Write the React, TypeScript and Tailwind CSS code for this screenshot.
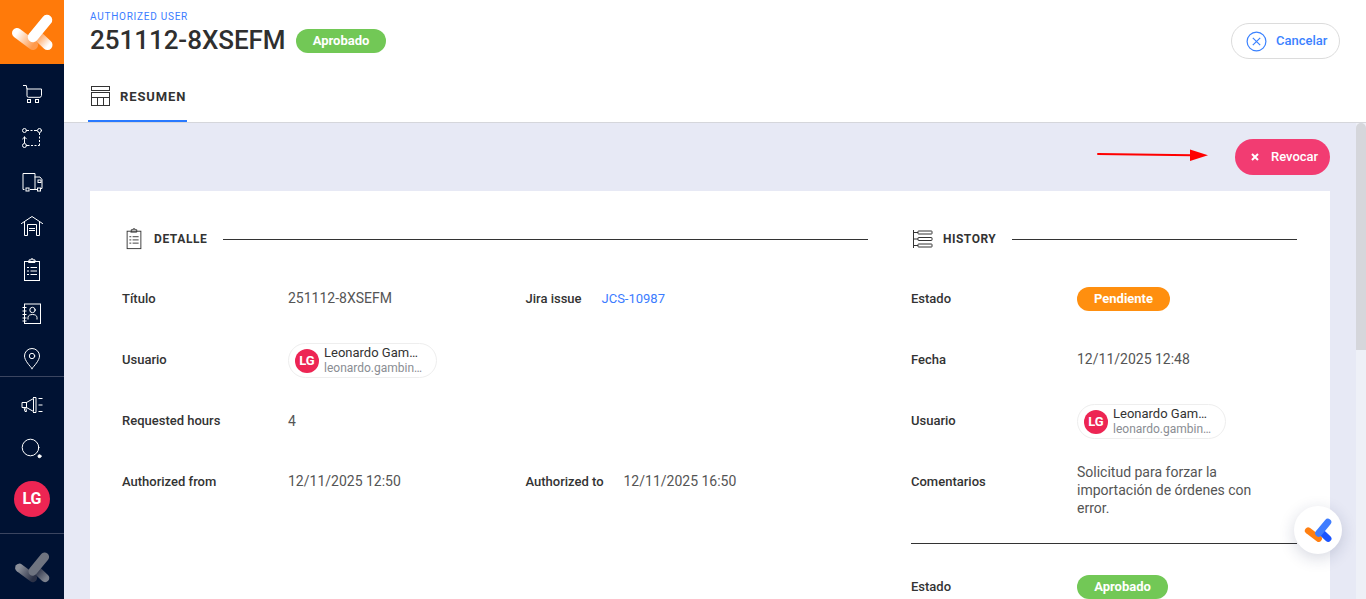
import React from "react";

const Logo = ({ size = 64, muted = false, color = false }: { size?: number; muted?: boolean; color?: boolean }) => {
  const id = muted ? "m" : color ? "c" : "w";
  const a = color ? "#ff7f11" : muted ? "#8a8e98" : "#ffffff";
  const b = color ? "#ff7f11" : muted ? "#2c3247" : "#ff9a4d";
  const c = color ? "#3f7dff" : muted ? "#6f7480" : "#ffffff";
  const d = color ? "#1c55ff" : muted ? "#7b808c" : "#ffffff";
  const e = color ? "#1c55ff" : muted ? "#2c3247" : "#ff9a4d";
  return (
    <svg width={size} height={size} viewBox="0 0 64 64" fill="none">
      <defs>
        <linearGradient id={id + "1"} x1="17" y1="33" x2="34" y2="44" gradientUnits="userSpaceOnUse">
          <stop stopColor={a} />
          <stop offset="1" stopColor={b} />
        </linearGradient>
        <linearGradient id={id + "2"} x1="48" y1="46" x2="37" y2="36" gradientUnits="userSpaceOnUse">
          <stop stopColor={d} />
          <stop offset="1" stopColor={e} />
        </linearGradient>
      </defs>
      <line x1="17" y1="33" x2="33" y2="45" stroke={`url(#${id}1)`} strokeWidth="10" strokeLinecap="round" />
      <line x1="39" y1="37" x2="47.500" y2="45" stroke={`url(#${id}2)`} strokeWidth="10" strokeLinecap="round" />
      <line x1="33" y1="37" x2="47" y2="20" stroke={c} strokeWidth="10.500" strokeLinecap="round" />
    </svg>
  );
};

const I = ({ children, w = 24 }: { children: React.ReactNode; w?: number }) => (
  <svg width={w} height={w} viewBox="0 0 24 24" fill="none" stroke="currentColor" strokeWidth="1" strokeLinecap="square">
    {children}
  </svg>
);

const Clip = () => (
  <>
    <rect x="4.5" y="3.5" width="15" height="19" />
    <path d="M9 3.5V1.9h2.2V.8h1.6v1.1H15v2.6H9z" />
    <path d="M7.5 9.5h1M11 9.5h5.5M7.5 13h1M11 13h5.5M7.5 16.5h1M11 16.5h5.5" />
  </>
);

const navTop = [
  <I key="cart"><path d="M3.500 3.500h2.800l.7 3.500h14.500v6.500a2 2 0 0 1-1.500 1.800H8.500a1.500 1.500 0 0 1-1.500-1.500V7" /><rect x="7.500" y="17.500" width="3" height="3" /><rect x="15.500" y="17.500" width="3" height="3" /></I>,
  <I key="route"><circle cx="4.500" cy="4.500" r="2" /><circle cx="19.500" cy="4.500" r="2" /><circle cx="4.500" cy="19.500" r="2" /><path d="M7.500 4.500h1M11 4.500h1M14.500 4.500h2M19.500 7.500v1M19.500 11v1M19.500 14.500v1M19.500 18v1.500h-1M16 19.500h-1M12.500 19.500h-1M9 19.500H7.500M4.500 16.500V11M2.700 12.800l1.800-1.800 1.800 1.800" /></I>,
  <I key="truck"><path d="M4 19.500H3V3.500h12v16h-4.500M15 7h5l2 2.500v9h-1M15 19.500h2" /><rect x="6" y="18" width="3" height="3" /><rect x="17.500" y="18" width="3" height="3" /><rect x="18" y="10" width="3" height="2.500" /></I>,
  <I key="warehouse"><path d="M1.500 9.500 12 2.500 22.500 9.500M4.500 8v13.500h3V10.500h9v11h3V8" /><path d="M9.500 14.500h5M9.500 16.500h5" /></I>,
  <I key="clip"><Clip /></I>,
  <I key="contacts"><rect x="4.500" y="2" width="16" height="19.500" /><path d="M3 5.500h3M3 9h3M3 12.500h3M3 16h3M3 19h3" /><circle cx="12.500" cy="8" r="2.700" /><path d="M8 17v-1.500c0-2 2-3 4.500-3s4.500 1 4.500 3V17" /></I>,
  <I key="pin"><path d="M12 22.500c-2-2.500-7.500-8-7.500-12.500a7.500 7.500 0 0 1 15 0c0 4.500-5.500 10-7.500 12.500z" /><circle cx="12" cy="10" r="2.700" /></I>,
];

const Row = ({ label, children }: { label: string; children: React.ReactNode }) => (
  <div className="flex h-[61px] items-center">
    <div className="w-[166px] shrink-0 text-[13px] font-medium text-[#333]">{label}</div>
    {children}
  </div>
);

const Val = ({ children }: { children: React.ReactNode }) => (
  <div className="text-[14px] text-[#555]">{children}</div>
);

const Chip = () => (
  <div className="mt-[2px] flex h-[35px] w-[149px] items-center gap-[5px] rounded-full border border-[#eee] bg-white pl-[6px]">
    <div className="flex h-6 w-6 shrink-0 items-center justify-center rounded-full bg-[#ed2553] text-[13px] font-bold text-white">LG</div>
    <div className="w-[104px] whitespace-nowrap">
      <div className="text-[13px] leading-[15px] text-[#333]">Leonardo Gam…</div>
      <div className="mt-[1px] text-[12px] leading-[15px] text-[#8a8d93]">leonardo.gambin…</div>
    </div>
  </div>
);

const Badge = ({ text, w, bg }: { text: string; w: string; bg: string }) => (
  <span className={`flex h-6 items-center justify-center rounded-full text-[13px] font-bold text-white ${w} ${bg}`}>{text}</span>
);

const Section = ({ icon, title, tracking, gap }: { icon: React.ReactNode; title: string; tracking: string; gap: string }) => (
  <div className="flex h-[24px] items-center text-[#333]">
    {icon}
    <span className={`whitespace-nowrap text-[12px] font-bold ${tracking}`}>{title}</span>
    <div className={`h-px flex-1 bg-[#333] ${gap}`} />
  </div>
);

export default function App() {
  return (
    <div className="flex h-[599px] w-[1366px] overflow-hidden bg-white font-['Roboto',sans-serif]">
      <aside className="flex w-16 shrink-0 flex-col bg-[#001233] text-white">
        <div className="h-16 bg-[#ff7a0a]"><Logo /></div>
        <div className="h-[312px] pt-2">
          {navTop.map((n, i) => (
            <div key={i} className="flex h-11 items-center justify-center">{n}</div>
          ))}
        </div>
        <div className="h-px bg-[#3b4560]" />
        <div className="pt-[6px]">
          <div className="flex h-11 items-center justify-center">
            <I><path d="M2.500 9.500h4v5h-4zM6.500 9.500 13.500 5.500v13l-7-4M13.500 4.500h2.500v15h-2.500M4 14.500l1 4h1.500l-.8-4M19 5.500h3M19 12h3M19 18.500h3" /></I>
          </div>
          <div className="flex h-11 items-center justify-center">
            <I><circle cx="10.500" cy="10.500" r="8.300" /><circle cx="19.500" cy="19.200" r="1.500" fill="currentColor" /></I>
          </div>
          <div className="mt-[10px] flex justify-center">
            <div className="flex h-9 w-9 items-center justify-center rounded-full bg-[#ed2553] text-[16px] font-bold">LG</div>
          </div>
        </div>
        <div className="mt-4 h-px bg-[#3b4560]" />
        <div className="mt-[6px] flex justify-center"><Logo size={54} muted /></div>
      </aside>

      <div className="flex min-w-0 flex-1 flex-col">
        <header className="h-[123px] shrink-0 border-b border-[#d5d6db] bg-white">
          <div className="flex h-[80px] items-start justify-between pl-[26px] pr-[26px]">
            <div className="pt-[11px]">
              <div className="text-[10px] leading-[12px] tracking-[0.75px] text-[#3b7cff]">AUTHORIZED USER</div>
              <div className="mt-[2px] flex items-center gap-[10px]">
                <h1 className="w-[196px] whitespace-nowrap text-[26px] leading-[31px] font-medium tracking-[-0.05px] text-[#2f2f2f]">251112-8XSEFM</h1>
                <Badge text="Aprobado" w="w-[90px]" bg="bg-[#72c856]" />
              </div>
            </div>
            <button className="mt-[23px] flex h-9 w-[109px] items-center rounded-full border border-[#dcdcdc] pl-[14px] text-[13px] font-medium text-[#3b82ff]">
              <svg width="21" height="21" viewBox="0 0 21 21" fill="none" stroke="currentColor" strokeWidth="1.200"><circle cx="10.500" cy="10.500" r="9.400" /><path d="M6.800 6.800l7.400 7.400M14.200 6.800l-7.400 7.400" /></svg>
              <span className="ml-[9px]">Cancelar</span>
            </button>
          </div>
          <div className="ml-6 flex h-[42px] w-[99px] items-center border-b-2 border-[#2979ff] pb-[6px] pl-[3px] text-[#333]">
            <svg className="-translate-y-px" width="19" height="21" viewBox="0 0 19 21" fill="none" stroke="currentColor" strokeWidth="1"><rect x=".5" y=".5" width="18" height="4" /><rect x=".5" y="6.500" width="18" height="13" /><path d="M.5 11.500h18M6.500 11.500v8M12.500 11.500v8" /></svg>
            <span className="ml-[10px] text-[13px] font-bold tracking-[0.9px]">RESUMEN</span>
          </div>
        </header>

        <div className="flex min-h-0 flex-1">
          <main className="min-w-0 flex-1 overflow-hidden bg-[#e7e9f5]">
            <div className="flex h-[68px] items-start justify-end pr-[26px] pt-4">
              <button className="flex h-9 w-[95px] items-center rounded-full bg-[#f23c72] pl-4 text-[13px] font-medium text-white">
                <svg width="8" height="8" viewBox="0 0 8 8" stroke="currentColor" strokeWidth="2"><path d="M1 1l6 6M7 1L1 7" /></svg>
                <span className="ml-3">Revocar</span>
              </button>
            </div>
            <div className="ml-[26px] mr-[26px] flex bg-white pb-10 pl-8 pr-[33px] pt-[36px]">
              <section className="w-[746px] shrink-0">
                <Section tracking="tracking-[0.6px]" gap="ml-4" icon={<span className="ml-[1px] mr-[9px] text-[#333]"><I w={22}><Clip /></I></span>} title="DETALLE" />
                <div className="mt-[17px]">
                  <Row label="Título">
                    <div className="w-[237.500px]"><Val>251112-8XSEFM</Val></div>
                    <div className="w-[76px] text-[13px] font-medium text-[#333]">Jira issue</div>
                    <div className="text-[13px] text-[#3b7cff]">JCS-10987</div>
                  </Row>
                  <Row label="Usuario"><Chip /></Row>
                  <Row label="Requested hours"><div className="mt-[2px]"><Val>4</Val></div></Row>
                  <Row label="Authorized from">
                    <div className="w-[237.500px]"><Val>12/11/2025 12:50</Val></div>
                    <div className="w-[98px] text-[13px] font-medium text-[#333]">Authorized to</div>
                    <Val>12/11/2025 16:50</Val>
                  </Row>
                </div>
              </section>
              <section className="ml-[43px] min-w-0 flex-1">
                <Section tracking="tracking-[0.5px]" gap="ml-[16px]" icon={<span className="ml-[2px] mr-[10px] text-[#333]"><svg width="20" height="20" viewBox="0 0 20 20" fill="none" stroke="currentColor" strokeWidth="1"><path d="M.5 1v18" /><rect x="5" y="2" width="14" height="3" rx=".5" /><rect x="5" y="8.500" width="14" height="3" rx=".5" /><rect x="5" y="15" width="14" height="3" rx=".5" /><path d="M.5 3.500H5M.5 10H5M.5 16.500H5" /></svg></span>} title="HISTORY" />
                <div className="mt-[17px]">
                  <Row label="Estado"><Badge text="Pendiente" w="w-[93px]" bg="bg-[#ff8f0f]" /></Row>
                  <Row label="Fecha"><Val>12/11/2025 12:48</Val></Row>
                  <Row label="Usuario"><Chip /></Row>
                  <div className="flex h-[93px] items-start border-b border-[#333]">
                    <div className="w-[166px] shrink-0 pt-[21px] text-[13px] font-medium text-[#333]">Comentarios</div>
                    <div className="w-[190px] pt-[12px] text-[14px] leading-[18px] text-[#555]">Solicitud para forzar la importación de órdenes con error.</div>
                  </div>
                  <div className="mt-[12px]">
                    <Row label="Estado"><Badge text="Aprobado" w="w-[91px]" bg="bg-[#72c856]" /></Row>
                  </div>
                </div>
              </section>
            </div>
          </main>
          <div className="w-[10px] shrink-0 bg-[#eef0f7]">
            <div className="h-[227px] rounded-t-[5px] bg-[#d5d6db]" />
          </div>
        </div>
      </div>

      <svg className="absolute left-[1097px] top-[148px]" width="112" height="14" viewBox="0 0 112 14">
        <path d="M1 6l94 1.200" stroke="#ff0000" strokeWidth="2" strokeLinecap="round" />
        <path d="M93 1.600 111 7.300 93 13z" fill="#ff0000" />
      </svg>

      <div className="absolute left-[1294px] top-[506px] flex h-12 w-12 items-center justify-center rounded-full bg-white shadow-[0_4px_16px_rgba(30,40,90,0.18)]">
        <Logo size={42} color />
      </div>
    </div>
  );
}
